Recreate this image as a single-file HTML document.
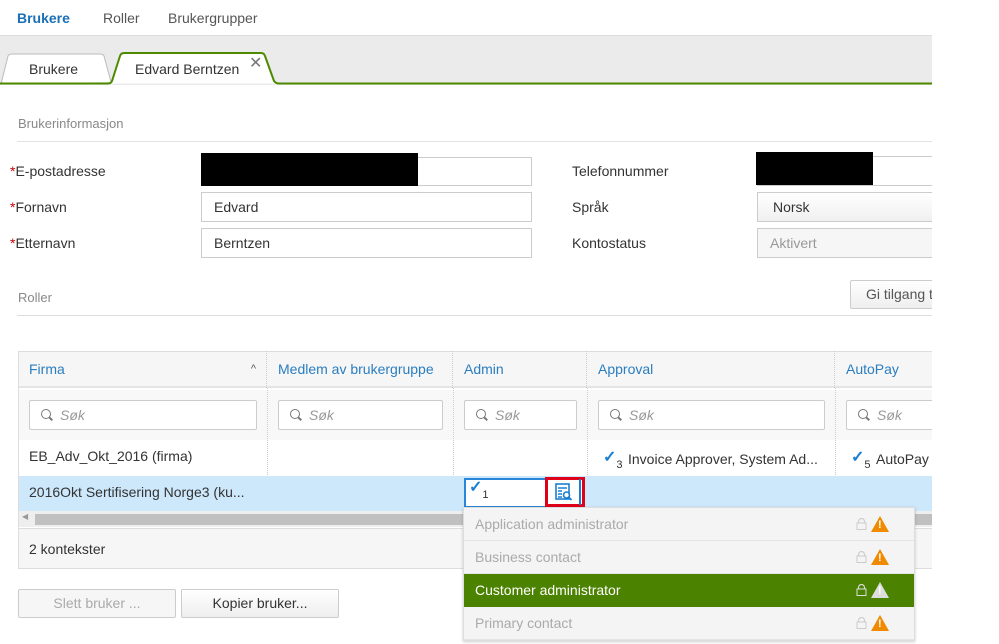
<!DOCTYPE html>
<html><head><meta charset="utf-8"><style>
*{box-sizing:border-box;margin:0;padding:0}
body{width:999px;height:644px;background:#fff;font-family:"Liberation Sans",sans-serif;font-size:14px;color:#333;position:relative;overflow:hidden}
#c{position:absolute;left:0;top:0;width:932px;height:644px;overflow:hidden}
.a{position:absolute;white-space:nowrap}
.inp{position:absolute;border:1px solid #ccc;background:#fff;padding-left:12px;line-height:28px;font-size:14px}
.lbl{position:absolute;font-size:14px;color:#333}
.lbl b{color:#c00;font-weight:normal}
.hd{position:absolute;top:351px;height:37px;line-height:37px;color:#2a7dc0;font-size:14px;padding-left:11px;border-right:1px dotted #ccc}
.fl{position:absolute;top:400px;height:30px;border:1px solid #ccc;background:#fff;border-radius:2px;font-style:italic;color:#999;line-height:28px;padding-left:30px;font-size:14px}
.fl:before{content:"";position:absolute;left:11px;top:8px;width:8px;height:8px;border:1.3px solid #777;border-radius:50%}
.fl:after{content:"";position:absolute;left:19px;top:17px;width:4px;height:1.5px;background:#777;transform:rotate(45deg)}
.dd{position:absolute;left:464px;width:450px;height:33px;line-height:32px;padding-left:11px;color:#aaa;font-size:14px;background:#f4f4f4;border-bottom:1px solid #e4e4e4}
.lk{position:absolute;right:47px;top:10px;width:11px;height:12px}
.wr{position:absolute;right:25px;top:8px;width:0;height:0;border-left:9px solid transparent;border-right:9px solid transparent;border-bottom:16px solid #f08a00}
.wr:after{content:"!";position:absolute;left:-2px;top:2px;color:#fff;font-size:11px;font-weight:bold;line-height:14px}
.btn{position:absolute;height:29px;border:1px solid #ccc;border-radius:2px;background:linear-gradient(#fff,#eee);text-align:center;line-height:27px;font-size:14px}
.chk{position:absolute;color:#1a7fd0;font-size:16px;font-weight:bold}
.chk sub{color:#333;font-size:11px;font-weight:normal;position:relative;top:2px}
</style></head><body><div id="c">
<div class="a" style="left:17px;top:10px;font-weight:bold;color:#1a6fb5;font-size:14px">Brukere</div>
<div class="a" style="left:103px;top:10px;color:#555;font-size:14px">Roller</div>
<div class="a" style="left:168px;top:10px;color:#555;font-size:14px">Brukergrupper</div>
<div class="a" style="left:0;top:35px;width:932px;height:50px;background:#ebebeb;border-top:1px solid #ddd"></div>
<svg class="a" style="left:0;top:50px" width="932" height="36">
<path d="M1 34 L8 6 Q9 4 12 4 L100 4 Q103 4 104 6 L111 32" fill="#fff" stroke="#bbb"/>
<path d="M0 33.5 L108 33.5 Q111 33.5 112 31 L120 6 Q121 3 124 3 L261 3 Q264 3 265 6 L274 31 Q276 33.5 279 33.5 L932 33.5" fill="#fff" stroke="#4d8a00" stroke-width="2"/>
<rect x="0" y="35" width="932" height="1" fill="#fff"/>
</svg>
<div class="a" style="left:29px;top:61px;font-size:14px;color:#333">Brukere</div>
<div class="a" style="left:135px;top:61px;font-size:14px;color:#333">Edvard Berntzen</div>
<div class="a" style="left:249px;top:53px;font-size:16px;color:#777">✕</div>
<div class="a" style="left:18px;top:116px;color:#888;font-size:13px">Brukerinformasjon</div>
<div class="a" style="left:17px;top:141px;width:915px;height:1px;background:#e2e2e2"></div>
<div class="lbl" style="left:10px;top:163px"><b>*</b>E-postadresse</div>
<div class="lbl" style="left:10px;top:199px"><b>*</b>Fornavn</div>
<div class="lbl" style="left:10px;top:235px"><b>*</b>Etternavn</div>
<div class="inp" style="left:201px;top:157px;width:331px;height:29px"></div>
<div class="a" style="left:201px;top:153px;width:217px;height:33px;background:#000"></div>
<div class="inp" style="left:201px;top:192px;width:331px;height:30px">Edvard</div>
<div class="inp" style="left:201px;top:228px;width:331px;height:30px">Berntzen</div>
<div class="lbl" style="left:572px;top:163px">Telefonnummer</div>
<div class="lbl" style="left:572px;top:199px">Språk</div>
<div class="lbl" style="left:572px;top:235px">Kontostatus</div>
<div class="inp" style="left:757px;top:156px;width:200px;height:30px"></div>
<div class="a" style="left:756px;top:152px;width:117px;height:33px;background:#000"></div>
<div class="inp" style="left:757px;top:192px;width:200px;height:30px;background:linear-gradient(#fff,#f0f0f0);padding-left:15px">Norsk</div>
<div class="inp" style="left:757px;top:228px;width:200px;height:30px;background:#f6f6f6;color:#999">Aktivert</div>
<div class="a" style="left:18px;top:290px;color:#888;font-size:13px">Roller</div>
<div class="btn" style="left:850px;top:280px;width:120px;color:#555;text-align:left;padding-left:15px">Gi tilgang til</div>
<div class="a" style="left:17px;top:315px;width:915px;height:1px;background:#ddd"></div>
<div class="a" style="left:18px;top:351px;width:930px;height:218px;border:1px solid #ddd;background:#fff"></div>
<div class="a" style="left:19px;top:352px;width:913px;height:36px;background:#f6f6f6;border-bottom:2px solid #e4e4e4"></div>
<div class="a" style="left:19px;top:390px;width:913px;height:50px;background:#f8f8f8"></div>
<div class="hd" style="left:18px;width:249px">Firma<span style="position:absolute;right:10px;color:#555;font-size:11px">^</span></div>
<div class="hd" style="left:267px;width:186px">Medlem av brukergruppe</div>
<div class="hd" style="left:453px;width:134px">Admin</div>
<div class="hd" style="left:587px;width:248px">Approval</div>
<div class="hd" style="left:835px;width:120px;border:none">AutoPay</div>
<div class="a" style="left:267px;top:388px;width:0;height:123px;border-left:1px dotted #ccc"></div>
<div class="a" style="left:453px;top:388px;width:0;height:123px;border-left:1px dotted #ccc"></div>
<div class="a" style="left:587px;top:388px;width:0;height:123px;border-left:1px dotted #ccc"></div>
<div class="a" style="left:835px;top:388px;width:0;height:123px;border-left:1px dotted #ccc"></div>
<div class="fl" style="left:29px;width:228px">Søk</div>
<div class="fl" style="left:278px;width:165px">Søk</div>
<div class="fl" style="left:464px;width:113px">Søk</div>
<div class="fl" style="left:598px;width:227px">Søk</div>
<div class="fl" style="left:846px;width:120px">Søk</div>
<div class="a" style="left:29px;top:448px">EB_Adv_Okt_2016 (firma)</div>
<div class="chk" style="left:603px;top:447px">✓<sub>3</sub></div>
<div class="a" style="left:628px;top:451px">Invoice Approver, System Ad...</div>
<div class="chk" style="left:851px;top:447px">✓<sub>5</sub></div>
<div class="a" style="left:876px;top:451px">AutoPay</div>
<div class="a" style="left:19px;top:476px;width:913px;height:35px;background:#cde8fb"></div>
<div class="a" style="left:29px;top:484px">2016Okt Sertifisering Norge3 (ku...</div>
<div class="a" style="left:19px;top:511px;width:913px;height:16px;background:#eee"></div>
<div class="a" style="left:35px;top:514px;width:897px;height:11px;background:#c0c0c0"></div>
<div class="a" style="left:22px;top:512px;font-size:8px;color:#999">◀</div>
<div class="a" style="left:19px;top:528px;width:913px;height:40px;background:#f6f6f6;border-top:1px solid #ddd"></div>
<div class="a" style="left:29px;top:541px">2 kontekster</div>
<div class="a" style="left:464px;top:478px;width:120px;height:30px;border:2px solid #2a86d8;background:#fff"></div>
<div class="chk" style="left:469px;top:477px">✓<sub>1</sub></div>
<div class="a" style="left:545px;top:477px;width:40px;height:30px;border:3px solid #e0001a;background:#fff"></div>
<svg class="a" style="left:555px;top:483px" width="18" height="18" viewBox="0 0 18 18"><rect x="1" y="1" width="13" height="15" fill="none" stroke="#1a7fd0" stroke-width="1.6"/><path d="M3 5h9M3 8h4M3 11h4M3 14h4" stroke="#1a7fd0" stroke-width="1.4"/><circle cx="11.5" cy="12" r="3" fill="#fff" stroke="#1a7fd0" stroke-width="1.6"/><path d="M13.5 14l3 3" stroke="#1a7fd0" stroke-width="1.8"/></svg>
<div class="a" style="left:579px;top:479px;width:2px;height:26px;background:#1a7fd0"></div>
<div class="a" style="left:463px;top:507px;width:452px;height:134px;border:1px solid #ddd;box-shadow:0 1px 3px rgba(0,0,0,.2)"></div>
<div class="dd" style="top:508px">Application administrator<svg class="lk" viewBox="0 0 11 12"><path d="M2.5 5V3.5a3 3 0 0 1 6 0V5" fill="none" stroke="#ccc" stroke-width="1.2"/><rect x="1" y="5" width="9" height="6.5" fill="none" stroke="#ccc"/></svg><div class="wr"></div></div>
<div class="dd" style="top:541px">Business contact<svg class="lk" viewBox="0 0 11 12"><path d="M2.5 5V3.5a3 3 0 0 1 6 0V5" fill="none" stroke="#ccc" stroke-width="1.2"/><rect x="1" y="5" width="9" height="6.5" fill="none" stroke="#ccc"/></svg><div class="wr"></div></div>
<div class="dd" style="top:574px;background:#4b8200;color:#fff;border:none">Customer administrator<svg class="lk" viewBox="0 0 11 12"><path d="M2.5 5V3.5a3 3 0 0 1 6 0V5" fill="none" stroke="#ddd" stroke-width="1.2"/><rect x="1" y="5" width="9" height="6.5" fill="none" stroke="#ddd"/></svg><div class="wr" style="border-bottom-color:#ddd"></div></div>
<div class="dd" style="top:607px">Primary contact<svg class="lk" viewBox="0 0 11 12"><path d="M2.5 5V3.5a3 3 0 0 1 6 0V5" fill="none" stroke="#ccc" stroke-width="1.2"/><rect x="1" y="5" width="9" height="6.5" fill="none" stroke="#ccc"/></svg><div class="wr"></div></div>
<div class="btn" style="left:18px;top:589px;width:158px;color:#aaa;background:#f6f6f6">Slett bruker ...</div>
<div class="btn" style="left:181px;top:589px;width:158px;color:#333">Kopier bruker...</div>
</div></body></html>
